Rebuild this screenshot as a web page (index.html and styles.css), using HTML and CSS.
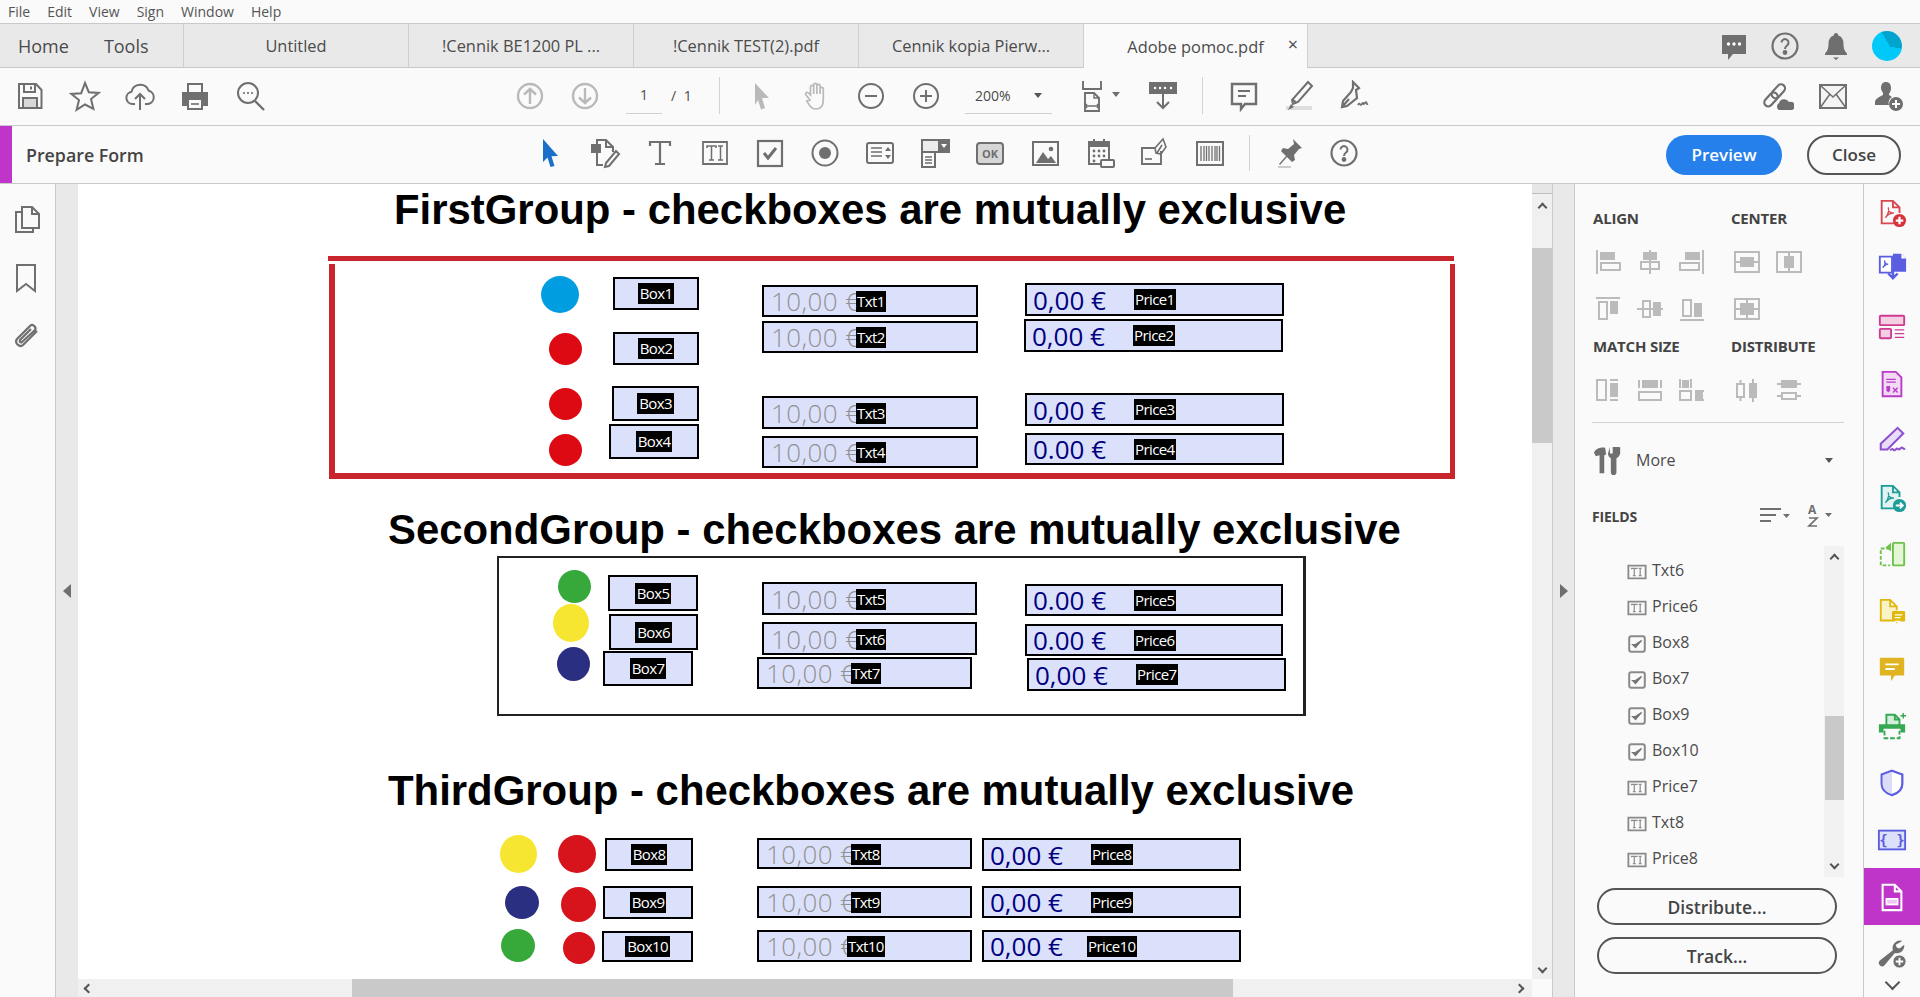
FILE: index.html
```html
<!DOCTYPE html>
<html lang="en">
<head>
<meta charset="utf-8">
<title>Adobe pomoc.pdf</title>
<link rel="stylesheet" href="styles.css">
</head>
<body>
<svg class="sprite" xmlns="http://www.w3.org/2000/svg">
  <symbol id="s-ti" viewBox="0 0 22 18"><path d="M1.500 2h19v14h-19z" fill="none" stroke="#8a8a8a" stroke-width="2"/><path d="M5 6V5h6v1M8 5v8M6.500 13h3M13 5h3M13 13h3M14.500 5v8" fill="none" stroke="#8a8a8a" stroke-width="1.300"/></symbol>
  <symbol id="s-chk" viewBox="0 0 18 18"><rect x="1.200" y="1.200" width="15.600" height="15.600" rx="2" fill="none" stroke="#8a8a8a" stroke-width="2"/><path d="M4.500 9.500l3 3 6-7-5.800 3.800z" fill="#777" stroke="#777" stroke-width="1.200"/></symbol>
  <symbol id="s-help" viewBox="0 0 32 32"><circle cx="16" cy="16" r="12.500" fill="none" stroke="#6f6f6f" stroke-width="2.200"/><path d="M12.500 12.500a3.500 3.500 0 1 1 5.500 3c-1.300 1-2 1.700-2 3.500" fill="none" stroke="#6f6f6f" stroke-width="2"/><circle cx="16" cy="22.500" r="1.400" fill="#6f6f6f"/></symbol>
</svg>
<div class="app">
  <nav class="menu"><span>File</span><span>Edit</span><span>View</span><span>Sign</span><span>Window</span><span>Help</span></nav>

  <div class="tabs">
    <div class="tab-home"><span>Home</span><span>Tools</span></div>
    <div class="tab">Untitled</div>
    <div class="tab">!Cennik BE1200 PL ...</div>
    <div class="tab">!Cennik TEST(2).pdf</div>
    <div class="tab">Cennik kopia Pierw...</div>
    <div class="tab tab-active">Adobe pomoc.pdf<span class="tab-x">×</span></div>
    <div class="tab-right">
      <span class="ib50"><svg class="ic" viewBox="0 0 32 32"><path class="solid" d="M4 5h24v19H15l-5 6v-6H4z"/><g fill="#fff" stroke="none"><circle cx="10.500" cy="14" r="1.700"/><circle cx="16" cy="14" r="1.700"/><circle cx="21.500" cy="14" r="1.700"/></g></svg></span>
      <span class="ib50"><svg class="ic"><use href="#s-help"/></svg></span>
      <span class="ib50"><svg class="ic" viewBox="0 0 32 32"><path class="solid" d="M16 3c1.500 0 2.200 1 2.300 2.400 3.500 1 5.200 4 5.200 8 0 5 1 7.500 3.500 10v1.600H5v-1.600c2.500-2.500 3.500-5 3.500-10 0-4 1.700-7 5.200-8C13.800 4 14.500 3 16 3zM13 27.500h6l-3 2.500z"/></svg></span>
      <span class="avatar"></span>
    </div>
  </div>

  <div class="toolbar">
    <span class="ib"><svg class="ic" viewBox="0 0 32 32"><path d="M5 4h17l5.500 6v18H5z"/><path d="M10 4v8h11V4M17 6.500v3"/><rect x="9" y="18" width="14" height="10" fill="#d8d8d8"/></svg></span>
    <span class="ib"><svg class="ic" viewBox="0 0 32 32"><path d="M16 3l3.800 9.200 9.700.7-7.500 6.200 2.400 9.700L16 24.500l-8.400 5.300L10 20.100l-7.500-6.200 9.700-.7z"/></svg></span>
    <span class="ib"><svg class="ic" viewBox="0 0 32 32"><path d="M11 24H8.500a6.200 6.200 0 0 1-1-12.300 9 9 0 0 1 17.200-1 6.800 6.800 0 0 1-.7 13.300h-3"/><path d="M16 30V14M11 19l5-5 5 5"/></svg></span>
    <span class="ib"><svg class="ic" viewBox="0 0 32 32"><path d="M9 12V4h14v8"/><path class="solid" d="M3 12h26v14h-6v-6H9v6H3z"/><rect x="9" y="19" width="14" height="10" fill="#fafafa"/><path d="M12 24h8" stroke-width="1.600"/></svg></span>
    <span class="ib"><svg class="ic" viewBox="0 0 32 32"><circle cx="14" cy="13" r="10"/><path d="M21 21l9 9" stroke-width="2.400"/><g class="solid-g"><circle cx="10" cy="13" r="1.100"/><circle cx="14" cy="13" r="1.100"/><circle cx="18" cy="13" r="1.100"/></g></svg></span>

    <span class="ib ml-nav dim"><svg class="ic" viewBox="0 0 32 32"><circle cx="16" cy="16" r="12"/><path d="M16 24V9M10 14.500L16 9l6 5.500"/></svg></span>
    <span class="ib dim"><svg class="ic" viewBox="0 0 32 32"><circle cx="16" cy="16" r="12"/><path d="M16 8v15M10 17.500l6 5.500 6-5.500"/></svg></span>
    <span class="page-input">1</span><span class="page-total">/ 1</span>
    <span class="sep sep-a"></span>
    <span class="ib ml-13 dim"><svg class="ic" viewBox="0 0 32 32"><path class="solid-dim" d="M10 3l14 15h-7l3 10-4 1.500L13 20l-3 5z"/></svg></span>
    <span class="ib dim"><svg class="ic" viewBox="0 0 32 32"><path d="M10 20l-4-5c-1.500-2 1-3.500 2.500-2l2 2V7a1.600 1.600 0 0 1 3.200 0v7-9a1.600 1.600 0 0 1 3.200 0v9-8a1.600 1.600 0 0 1 3.200 0v8-5a1.600 1.600 0 0 1 3.200 0v11c0 6-3 9-7.500 9s-6-3-9-8z" stroke-width="1.700"/></svg></span>
    <span class="ib"><svg class="ic" viewBox="0 0 32 32"><circle cx="16" cy="16" r="12"/><path d="M10 16h12"/></svg></span>
    <span class="ib"><svg class="ic" viewBox="0 0 32 32"><circle cx="16" cy="16" r="12"/><path d="M10 16h12M16 10v12"/></svg></span>
    <span class="zoom-box"><span>200%</span><i class="caret"></i></span>
    <span class="ib ml-24"><svg class="ic wide" viewBox="0 0 48 32"><path d="M3 1v8h18V1M5 31V13h9l5 5v13z" stroke-width="1.900"/><path d="M14 13v5h5M5 26h14M5 26l2-2M5 26l2 2M19 26l-2-2M19 26l-2 2" stroke-width="1.400"/><path class="solid" d="M32 12h8l-4 5z"/></svg></span>
    <span class="ib ml-4"><svg class="ic" viewBox="0 0 32 32"><rect x="3" y="3" width="26" height="10" fill="#6f6f6f"/><path d="M8 8h.1M13 8h.1M18 8h.1M24 8h.1" stroke="#fff" stroke-width="2.400" stroke-linecap="round"/><path d="M16 13v15M10 22l6 6 6-6"/></svg></span>
    <span class="sep sep-b"></span>
    <span class="ib ml-13"><svg class="ic" viewBox="0 0 32 32"><path d="M4 4h24v20H17l-4 5v-5H4z" stroke-width="2.400"/><path d="M10 11h12M10 16h8"/></svg></span>
    <span class="ib"><svg class="ic" viewBox="0 0 32 32"><path d="M25 2l4 4L15 22l-5 2-1-4zM10 20l4 3"/><rect x="3" y="26" width="26" height="4" fill="#ddd" stroke="none"/><path class="solid" d="M5 30l3-6 3 3z"/></svg></span>
    <span class="ib"><svg class="ic" viewBox="0 0 32 32"><path d="M15 2l6 6-3 2 1 8-10 8-5 1 1-6 8-9 2-4zM4 27l7-8" stroke-width="2.200"/><path d="M20 25c2-4 2 2 4-1s1 2 3-1 1 2 3 1" stroke-width="1.800"/></svg></span>
    <div class="tool-right">
      <span class="ib"><svg class="ic" viewBox="0 0 32 32"><g transform="rotate(-48 13 15)"><rect x="-1" y="11" width="16" height="8" rx="4" stroke-width="2.200"/><rect x="10" y="11" width="16" height="8" rx="4" stroke-width="2.200"/></g><path class="solid" d="M17 30a4 4 0 0 1 0-7 5.500 5.500 0 0 1 10-1 4.200 4.200 0 0 1 3 8z"/></svg></span>
      <span class="ib"><svg class="ic" viewBox="0 0 32 32"><rect x="3" y="5" width="26" height="23" fill="#f4f4f4"/><path d="M3 5l13 12L29 5M3 28l10-14M29 28L19 14" stroke-width="1.500"/></svg></span>
      <span class="ib"><svg class="ic" viewBox="0 0 32 32"><path class="solid" d="M14 2c3 0 5 2 5 6 0 2.500-1 4.500-2 6v1l3 2a7 7 0 0 0-3 8H3v-3c0-3 4-5 8-7v-2c-1-1.500-2-3.500-2-5 0-4 2-6 5-6z"/><circle cx="24" cy="24" r="7" fill="#6f6f6f" stroke="none"/><path d="M24 20v8M20 24h8" stroke="#fff" stroke-width="2"/></svg></span>
    </div>
  </div>

  <div class="formbar">
    <span class="strip"></span>
    <span class="form-title">Prepare Form</span>
    <span class="ib"><svg class="ic" viewBox="0 0 32 32"><path fill="#1a6fc9" stroke="none" d="M9 2l15 17-6.500.3 3 9.700-4 1-3-9.500L9 25z"/></svg></span>
    <span class="ib"><svg class="ic" viewBox="0 0 32 32"><path class="solid" d="M2 7h10v9H2z"/><path d="M8 7V3h9l7 7v5M17 3v7h7M8 16v12h6"/><path d="M27 14l3 3-10 12-4 1 1-4z"/></svg></span>
    <span class="ib"><svg class="ic" viewBox="0 0 32 32"><path d="M6 9V5h20v4M16 5v22M11 27h10" stroke-width="2.200"/></svg></span>
    <span class="ib"><svg class="ic" viewBox="0 0 32 32"><path d="M4 5h24v22H4z" stroke-width="1.800"/><path d="M8 11v-2h9v2M12.500 9v14M10 23h5M19 9h5M19 23h5M21.500 9v14" stroke-width="1.500"/></svg></span>
    <span class="ib"><svg class="ic" viewBox="0 0 32 32"><rect x="4" y="4" width="24" height="25" stroke-width="2.200"/><path d="M10 16l4 5 8-10" stroke-width="3"/></svg></span>
    <span class="ib"><svg class="ic" viewBox="0 0 32 32"><circle cx="16" cy="16" r="12.500"/><circle class="solid" cx="16" cy="16" r="6"/></svg></span>
    <span class="ib"><svg class="ic" viewBox="0 0 32 32"><rect x="3" y="6" width="26" height="20" rx="2"/><path d="M7 11h11M7 15h11M7 19h11" stroke-width="1.600"/><path class="solid" d="M21 14h6l-3-4zM21 18h6l-3 4z"/></svg></span>
    <span class="ib"><svg class="ic" viewBox="0 0 32 32"><rect x="3" y="3" width="27" height="12" fill="#ececec"/><rect x="20" y="3" width="10" height="12" fill="#6f6f6f"/><path d="M22 7h6l-3 4z" fill="#fff" stroke="none"/><rect x="3" y="15" width="13" height="15"/><path d="M6 20h7M6 23h7M6 26h7" stroke-width="1.500"/></svg></span>
    <span class="ib"><svg class="ic" viewBox="0 0 32 32"><rect x="3" y="6" width="26" height="21" rx="3" fill="#d6d6d6"/><text class="ok-text" x="16" y="21">OK</text></svg></span>
    <span class="ib"><svg class="ic" viewBox="0 0 32 32"><rect x="4" y="5" width="25" height="23"/><path class="solid" d="M7 26l7-11 5 7 3-3 5 7z"/><circle class="solid" cx="22" cy="12" r="2.300"/></svg></span>
    <span class="ib"><svg class="ic" viewBox="0 0 32 32"><path d="M5 5h20v22H5zM10 2v5M20 2v5"/><path class="solid" d="M5 5h20v5H5z"/><g class="solid-g"><circle cx="10" cy="14" r="1.400"/><circle cx="15" cy="14" r="1.400"/><circle cx="20" cy="14" r="1.400"/><circle cx="10" cy="19" r="1.400"/><circle cx="15" cy="19" r="1.400"/><circle cx="20" cy="19" r="1.400"/><circle cx="10" cy="24" r="1.400"/></g><rect x="17" y="23" width="13" height="7" rx="1" fill="#fafafa"/></svg></span>
    <span class="ib"><svg class="ic" viewBox="0 0 32 32"><path d="M22 14v13H3V11h13" stroke-width="1.900"/><path d="M24 2l3 8-5 7-5-1-1-5zM18 16l5-8" stroke-width="1.600"/><path d="M6 22h7" stroke-width="1.600"/></svg></span>
    <span class="ib"><svg class="ic" viewBox="0 0 32 32"><rect x="3" y="5" width="26" height="23"/><path d="M7 9v15M10 9v15M12.500 9v15M15 9v15M18 9v15M21 9v15M23 9v15M25.500 9v15" stroke-width="1.300"/></svg></span>
    <span class="sep sep-c"></span>
    <span class="ib ml-11"><svg class="ic" viewBox="0 0 32 32"><path class="solid" d="M20 2l9 9-3 1-5 6 1 5-3 2-5-5-7 8-1-1 7-8-5-5 2-3 5 1 6-5z"/><path d="M5 30h13" stroke="#ccc"/></svg></span>
    <span class="ib"><svg class="ic"><use href="#s-help"/></svg></span>
    <div class="form-actions"><button class="btn-primary">Preview</button><button class="btn-close">Close</button></div>
  </div>

  <div class="main">
    <aside class="lrail">
      <svg class="ic" viewBox="0 0 32 32"><path d="M12 3h10l7 7v14H12z"/><path d="M22 3v7h7M12 8H6v20h17v-4"/></svg>
      <svg class="ic" viewBox="0 0 32 32"><path d="M7 3h18v26l-9-7-9 7z"/></svg>
      <svg class="ic" viewBox="0 0 32 32"><path d="M27 11L13 25c-3 3-9-2-6-6L20 6c2-3 7 1 5 4L12 22c-1.500 1-3-.5-2-2l11-11" stroke-width="2.200"/></svg>
    </aside>
    <div class="gutter"><i class="tri-left"></i></div>

    <div class="doc">
      <div class="page">
        <h1 class="t1">FirstGroup - checkboxes are mutually exclusive</h1>
        <section class="g1">
          <i class="dot d-blue p1"></i><i class="dot d-red p2"></i><i class="dot d-red p3"></i><i class="dot d-red p4"></i>
          <div class="fld box b1"><b>Box1</b></div>
          <div class="fld box b2"><b>Box2</b></div>
          <div class="fld box b3"><b>Box3</b></div>
          <div class="fld box b4"><b>Box4</b></div>
          <div class="fld txt t-1"><span>10,00 €</span><b>Txt1</b></div>
          <div class="fld txt t-2"><span>10,00 €</span><b>Txt2</b></div>
          <div class="fld txt t-3"><span>10,00 €</span><b>Txt3</b></div>
          <div class="fld txt t-4"><span>10,00 €</span><b>Txt4</b></div>
          <div class="fld price r1"><span>0,00 €</span><b>Price1</b></div>
          <div class="fld price r2"><span>0,00 €</span><b>Price2</b></div>
          <div class="fld price r3"><span>0,00 €</span><b>Price3</b></div>
          <div class="fld price r4"><span>0.00 €</span><b>Price4</b></div>
        </section>

        <h1 class="t2">SecondGroup - checkboxes are mutually exclusive</h1>
        <section class="g2">
          <i class="dot d-green p5"></i><i class="dot d-yellow p6"></i><i class="dot d-navy p7"></i>
          <div class="fld box b5"><b>Box5</b></div>
          <div class="fld box b6"><b>Box6</b></div>
          <div class="fld box b7"><b>Box7</b></div>
          <div class="fld txt t-5"><span>10,00 €</span><b>Txt5</b></div>
          <div class="fld txt t-6"><span>10,00 €</span><b>Txt6</b></div>
          <div class="fld txt t-7"><span>10,00 €</span><b>Txt7</b></div>
          <div class="fld price r5"><span>0.00 €</span><b>Price5</b></div>
          <div class="fld price r6"><span>0.00 €</span><b>Price6</b></div>
          <div class="fld price r7"><span>0,00 €</span><b>Price7</b></div>
        </section>

        <h1 class="t3">ThirdGroup - checkboxes are mutually exclusive</h1>
        <section class="g3">
          <i class="dot d-yellow p8"></i><i class="dot d-red2 p9"></i>
          <i class="dot d-navy p10"></i><i class="dot d-red2 p11"></i>
          <i class="dot d-green p12"></i><i class="dot d-red2 p13"></i>
          <div class="fld box b8"><b>Box8</b></div>
          <div class="fld box b9"><b>Box9</b></div>
          <div class="fld box b10"><b>Box10</b></div>
          <div class="fld txt t-8"><span>10,00 €</span><b>Txt8</b></div>
          <div class="fld txt t-9"><span>10,00 €</span><b>Txt9</b></div>
          <div class="fld txt t-10"><span>10,00 €</span><b>Txt10</b></div>
          <div class="fld price r8"><span>0,00 €</span><b>Price8</b></div>
          <div class="fld price r9"><span>0,00 €</span><b>Price9</b></div>
          <div class="fld price r10"><span>0,00 €</span><b>Price10</b></div>
        </section>
      </div>
      <div class="hscroll"><i class="chev-l"></i><span class="hthumb"></span><i class="chev-r"></i></div>
    </div>

    <div class="vscroll"><span class="vhandle"></span><i class="chev-u"></i><span class="vthumb"></span><i class="chev-d"></i></div>
    <div class="gutter gutter-r"><i class="tri-right"></i></div>

    <aside class="panel">
      <div class="p-head"><span>ALIGN</span><span>CENTER</span></div>
      <div class="p-row">
        <span class="ai"><svg class="ic pi" viewBox="0 0 28 28"><path d="M3 2v24M7 5h13v6H7zM7 15h19v7H7z"/><rect x="7" y="5" width="13" height="6" fill="#bbb"/></svg></span>
        <span class="ai"><svg class="ic pi" viewBox="0 0 28 28"><path d="M14 2v24M8 5h12v6H8zM5 14h18v7H5z"/><rect x="8" y="5" width="12" height="6" fill="#bbb"/></svg></span>
        <span class="ai"><svg class="ic pi" viewBox="0 0 28 28"><path d="M25 2v24M8 5h13v6H8zM2 15h19v7H2z"/><rect x="8" y="5" width="13" height="6" fill="#bbb"/></svg></span>
        <span class="ai ai-gap"><svg class="ic pi" viewBox="0 0 28 28"><rect x="2" y="4" width="24" height="20"/><path d="M2 14h24"/><rect x="8" y="10" width="12" height="8" fill="#bbb"/></svg></span>
        <span class="ai"><svg class="ic pi" viewBox="0 0 28 28"><rect x="2" y="4" width="24" height="20"/><path d="M14 4v20"/><rect x="10" y="9" width="8" height="10" fill="#bbb"/></svg></span>
      </div>
      <div class="p-row">
        <span class="ai"><svg class="ic pi" viewBox="0 0 28 28"><path d="M2 3h24M5 7h8v17H5zM17 7h6v11h-6z"/><rect x="17" y="7" width="6" height="11" fill="#bbb"/></svg></span>
        <span class="ai"><svg class="ic pi" viewBox="0 0 28 28"><path d="M1 14h26M7 6h7v16H7zM18 8h6v12h-6z"/><rect x="18" y="8" width="6" height="12" fill="#bbb"/></svg></span>
        <span class="ai"><svg class="ic pi" viewBox="0 0 28 28"><path d="M2 25h24M5 5h8v16H5zM17 9h6v12h-6z"/><rect x="17" y="9" width="6" height="12" fill="#bbb"/></svg></span>
        <span class="ai ai-gap"><svg class="ic pi" viewBox="0 0 28 28"><rect x="2" y="4" width="24" height="20"/><path d="M2 14h24M14 4v20"/><rect x="8" y="9" width="12" height="10" fill="#bbb"/></svg></span>
      </div>
      <div class="p-head p-head2"><span>MATCH SIZE</span><span>DISTRIBUTE</span></div>
      <div class="p-row p-row3">
        <span class="ai"><svg class="ic pi" viewBox="0 0 28 28"><path d="M3 4h9v20H3zM16 4h8M16 24h8"/><rect x="17" y="8" width="6" height="12" fill="#bbb"/></svg></span>
        <span class="ai"><svg class="ic pi" viewBox="0 0 28 28"><path d="M3 16h22v8H3zM3 4v8M25 4v8"/><rect x="7" y="5" width="14" height="6" fill="#bbb"/></svg></span>
        <span class="ai"><svg class="ic pi" viewBox="0 0 28 28"><path d="M2 15h11v9H2zM2 3v9M13 3v9M17 15h9M17 24h9"/><rect x="5" y="5" width="5" height="6" fill="#bbb"/><rect x="18" y="17" width="6" height="5" fill="#bbb"/></svg></span>
        <span class="ai ai-gap"><svg class="ic pi" viewBox="0 0 28 28"><path d="M4 8h7v13H4zM7.500 4v4M7.500 21v4M17 8h6v13h-6zM20 3v5M20 21v5"/><rect x="17" y="8" width="6" height="13" fill="#bbb"/></svg></span>
        <span class="ai"><svg class="ic pi" viewBox="0 0 28 28"><path d="M7 5h14v6H7zM2 8h5M21 8h5M7 17h14v6H7zM2 20h5M21 20h5"/><rect x="7" y="5" width="14" height="6" fill="#bbb"/></svg></span>
      </div>
      <div class="p-sep"></div>
      <div class="p-more">
        <svg class="ic tools" viewBox="0 0 32 32"><path class="solid" d="M1 8c2-4 7-6 12-5l1 7-2 1v19H7V11L3 12zM18 2v7h3V2c3 0 5 0 5 0s2 0 3 .5V9c-1 3-2 4-4 5v15a2.500 2.500 0 0 1-6 0V14c-2-1-3-3-3-5z"/></svg>
        <span>More</span><i class="caret caret-more"></i>
      </div>
      <div class="p-fields">
        <strong>FIELDS</strong>
        <svg class="ic sort" viewBox="0 0 32 20"><path d="M1 3h21M1 9h16M1 15h11" stroke-width="2"/><path class="solid" d="M24 8h7l-3.500 4z"/></svg>
        <svg class="ic sort az" viewBox="0 0 32 24"><text class="az-text" x="2" y="10">A</text><path d="M3 14h8l-8 8h8" stroke-width="1.700"/><path class="solid" d="M19 9h7l-3.500 4z"/></svg>
      </div>
      <div class="p-list">
        <ul>
          <li><svg class="li-ti"><use href="#s-ti"/></svg>Txt6</li>
          <li><svg class="li-ti"><use href="#s-ti"/></svg>Price6</li>
          <li><svg class="li-chk"><use href="#s-chk"/></svg>Box8</li>
          <li><svg class="li-chk"><use href="#s-chk"/></svg>Box7</li>
          <li><svg class="li-chk"><use href="#s-chk"/></svg>Box9</li>
          <li><svg class="li-chk"><use href="#s-chk"/></svg>Box10</li>
          <li><svg class="li-ti"><use href="#s-ti"/></svg>Price7</li>
          <li><svg class="li-ti"><use href="#s-ti"/></svg>Txt8</li>
          <li><svg class="li-ti"><use href="#s-ti"/></svg>Price8</li>
        </ul>
        <div class="l-scroll"><i class="chev-u"></i><span class="lthumb"></span><i class="chev-d"></i></div>
      </div>
      <button class="p-btn">Distribute...</button>
      <button class="p-btn p-btn2">Track...</button>
    </aside>

    <aside class="rrail">
      <span class="ri"><svg class="rc" viewBox="0 0 32 32"><path fill="none" stroke="#d8474f" stroke-width="2" d="M19 27H5V3h12l7 7v6M17 3v7h7"/><path fill="none" stroke="#d8474f" stroke-width="1.400" d="M9 21c3-3 4-8 3-11 0 4 2 6 6 6-4 0-7 2-9 5z"/><circle cx="24" cy="24" r="7" fill="#d8333c"/><path d="M24 20v8M20 24h8" stroke="#fff" stroke-width="2.400"/></svg></span>
      <span class="ri ri-up"><svg class="rc" viewBox="0 0 32 32"><path fill="#fff" stroke="#5a5ee0" stroke-width="2" d="M3 6h13v17H3z"/><path fill="#5a5ee0" d="M17 3h9l5 5v14H17z"/><path fill="#fff" d="M26 3l5 5h-5z"/><path fill="none" stroke="#5a5ee0" stroke-width="1.300" d="M6 18c2-2 3-5 2-8 0 3 1 4 4 4-3 0-4 2-6 4z"/><path fill="none" stroke="#5a5ee0" stroke-width="2.600" d="M17 18v11M12 24l5 5 5-5"/></svg></span>
      <span class="ri"><svg class="rc" viewBox="0 0 32 32"><rect x="3" y="4" width="26" height="10" rx="1" fill="#f3cfe2" stroke="#cf3a93" stroke-width="2"/><rect x="3" y="18" width="12" height="10" rx="1" fill="#f3cfe2" stroke="#cf3a93" stroke-width="2"/><path d="M19 19h10M19 23h10M19 27h10" stroke="#cf3a93" stroke-width="1.400"/></svg></span>
      <span class="ri"><svg class="rc" viewBox="0 0 32 32"><path fill="#f1daf4" stroke="#bb3ac8" stroke-width="2" d="M6 3h14l6 6v20H6z"/><path d="M10 11h10M10 14h10" stroke="#bb3ac8" stroke-width="1.400"/><path d="M10 18h4v5l-2 2-2-2z" fill="#bb3ac8"/><path d="M17 20l5 5M22 20l-5 5" stroke="#bb3ac8" stroke-width="1.500"/></svg></span>
      <span class="ri"><svg class="rc" viewBox="0 0 32 32"><path fill="#e9def7" stroke="#8d50cf" stroke-width="2.200" d="M22 2l6 6L11 25H4v-6z"/><path fill="none" stroke="#8d50cf" stroke-width="2.200" d="M14 26c4-4 3 2 6-1s2 2 5-1 2 2 5 0"/></svg></span>
      <span class="ri"><svg class="rc" viewBox="0 0 32 32"><path fill="#e0f2f1" stroke="#1c9c96" stroke-width="2" d="M20 27H5V3h12l7 7v5M17 3v7h7"/><path fill="none" stroke="#1c9c96" stroke-width="1.400" d="M9 21c3-3 4-8 3-11 0 4 2 6 6 6-4 0-7 2-9 5z"/><circle cx="24" cy="24" r="7" fill="#1c9c96"/><path d="M20 24h7M24.500 21l3 3-3 3" fill="none" stroke="#fff" stroke-width="2"/></svg></span>
      <span class="ri"><svg class="rc" viewBox="0 0 32 32"><rect x="17" y="3" width="12" height="24" rx="1" fill="#e5f6d8" stroke="#6cc24a" stroke-width="2"/><path d="M14 9H4v18h10" fill="none" stroke="#6cc24a" stroke-width="2" stroke-dasharray="4 2"/><path d="M15 3l-6 5 6 4zM8 8h5" fill="#6cc24a"/></svg></span>
      <span class="ri"><svg class="rc" viewBox="0 0 32 32"><path fill="#fbf3c8" stroke="#e1b80d" stroke-width="2" d="M17 25H4V3h10l7 7v4M14 3v7h7"/><rect x="16" y="15" width="14" height="11" rx="1" fill="#e1b80d"/><path d="M20 26v4l4-4zM19 19h8M19 22h6" fill="#e1b80d" stroke="#fff" stroke-width="1.200"/></svg></span>
      <span class="ri"><svg class="rc" viewBox="0 0 32 32"><path fill="#e0b421" d="M4 4h24a1 1 0 0 1 1 1v17a1 1 0 0 1-1 1H19l-4 6v-6H4a1 1 0 0 1-1-1V5a1 1 0 0 1 1-1z"/><path d="M9 11h14M9 16h10" stroke="#fff" stroke-width="2"/></svg></span>
      <span class="ri"><svg class="rc" viewBox="0 0 32 32"><path fill="#d3eed9" stroke="#35a852" stroke-width="2" d="M10 15V4h9l5 5v6M19 4v5h5"/><path fill="#35a852" d="M2 14h28v9h-5v-4H7v4H2z"/><path fill="none" stroke="#35a852" stroke-width="2" stroke-dasharray="5 2" d="M8 21v8h16v-8"/><path d="M28 2v6M25 5h6" stroke="#35a852" stroke-width="1.500"/></svg></span>
      <span class="ri"><svg class="rc" viewBox="0 0 32 32"><path fill="#fff" stroke="#5a5ee0" stroke-width="2.400" d="M16 3l11 4v10c0 6-5 10-11 12C10 27 5 23 5 17V7z"/><path fill="#dcdcf7" d="M16 4v24C11 26 6 23 6 17V8z"/></svg></span>
      <span class="ri"><svg class="rc" viewBox="0 0 32 32"><rect x="2" y="6" width="28" height="20" fill="#dde0fa" stroke="#5a5ee0" stroke-width="2"/><text class="brace" x="16" y="21">{ }</text></svg></span>
      <span class="ri ri-active"><svg class="rc" viewBox="0 0 32 32"><path fill="none" stroke="#fff" stroke-width="2.200" d="M6 3h13l7 7v20H6zM19 3v7h7"/><rect x="10" y="18" width="12" height="6" fill="#f0c9f3" stroke="#fff" stroke-width="1.800"/></svg></span>
      <span class="ri"><svg class="rc" viewBox="0 0 32 32"><path fill="#6f6f6f" d="M27 2a8 8 0 0 0-10 10L3 23a3 3 0 0 0 5 5l11-13a8 8 0 0 0 10-9l-5 4-3-1-1-3z"/><circle cx="24" cy="24" r="7" fill="#6f6f6f" stroke="#fafafa" stroke-width="1"/><path d="M24 20v8M20 24h8" stroke="#fff" stroke-width="2"/></svg></span>
      <span class="ri-more"><i class="chev-d big"></i></span>
    </aside>
  </div>
</div>
</body>
</html>
```

FILE: styles.css
```css
* { box-sizing: border-box; }
html, body { margin: 0; height: 100%; overflow: hidden; }
body { font-family: "Open Sans", "Noto Sans", sans-serif; color: #4b4b4b; background: #fafafa; }
.sprite { display: none; }
.app { width: 1920px; height: 997px; display: flex; flex-direction: column; overflow: hidden; }

/* menu and tabs */
.menu { height: 23px; display: flex; align-items: center; gap: 17px; padding-left: 8px; font-size: 14px; background: #fafafa; color: #555; }
.tabs { height: 45px; display: flex; background: #e9e9e9; border-top: 1px solid #c9c9c9; border-bottom: 1px solid #c9c9c9; }
.tab-home { width: 183px; display: flex; align-items: center; gap: 35px; padding-left: 18px; font-size: 18px; }
.tab { width: 225px; display: flex; align-items: center; justify-content: center; font-size: 16.400px; border-left: 1px solid #cfcfcf; position: relative; }
.tab-active { background: #fafafa; margin-bottom: -1px; border-right: 1px solid #cfcfcf; }
.tab-x { position: absolute; right: 9px; top: 9px; font-size: 18px; line-height: 22px; }
.tab-right { margin-left: auto; display: flex; align-items: center; padding-right: 18px; }
.ib50 { width: 51px; height: 43px; display: flex; align-items: center; justify-content: center; }
.avatar { width: 30px; height: 30px; margin-left: 11px; border-radius: 50%; background: conic-gradient(from 10deg at 60% 52%, #00a4cc 0 90deg, #00c8f8 90deg 260deg, #00c8f8 260deg 320deg, #00a4cc 320deg); }

/* icons */
.ic { width: 32px; height: 32px; fill: none; stroke: #6f6f6f; stroke-width: 2; display: block; flex: none; }
.ic.wide { width: 48px; }
.solid { fill: #6f6f6f; stroke: none; }
.solid-g { fill: #6f6f6f; stroke: none; }
.solid-dim { fill: #b9b9b9; stroke: none; }
.dim .ic { stroke: #b9b9b9; stroke-width: 2.400; }
.ok-text { font: 700 11px "Open Sans", sans-serif; fill: #6f6f6f; stroke: none; text-anchor: middle; }
.az-text { font: 700 12px "Open Sans", sans-serif; fill: #6f6f6f; stroke: none; }
.brace { font: 700 15px "DejaVu Sans Mono", monospace; fill: #5a5ee0; text-anchor: middle; }
.ib { width: 55px; height: 57px; display: flex; align-items: center; justify-content: center; flex: none; }
.sep { width: 1px; background: #d2d2d2; flex: none; }

/* document toolbar */
.toolbar { height: 58px; display: flex; align-items: center; padding-left: 2px; border-bottom: 1px solid #c9c9c9; background: #fafafa; }
.toolbar .ib { margin-top: -2px; }
.ml-nav { margin-left: 225px; }
.ml-13 { margin-left: 13px; }
.ml-24 { margin-left: 24px; }
.ml-4 { margin-left: 4px; }
.ml-11 { margin-left: 11px; }
.page-input { width: 36px; margin-left: 14px; height: 36px; line-height: 34px; margin-top: -2px; text-align: center; font-size: 14px; border-bottom: 1px solid #cfcfcf; }
.page-total { margin-left: 9px; margin-top: -2px; font-size: 14px; width: 21px; word-spacing: 4px; white-space: nowrap; }
.sep-a { margin-left: 27px; height: 37px; margin-top: -2px; }
.sep-b { margin-left: 12px; height: 37px; margin-top: -2px; }
.zoom-box { margin-left: 12px; width: 87px; height: 36px; display: flex; align-items: center; padding-left: 10px; font-size: 14px; border-bottom: 1px solid #cfcfcf; margin-top: -2px; }
.caret { width: 0; height: 0; border-left: 4px solid transparent; border-right: 4px solid transparent; border-top: 5px solid #555; margin-left: auto; margin-right: 10px; }
.tool-right { margin-left: auto; display: flex; padding-right: 5px; }

/* prepare form bar */
.formbar { height: 58px; display: flex; align-items: center; border-bottom: 1px solid #c9c9c9; background: #fafafa; }
.formbar .ib { margin-top: -4px; }
.strip { width: 12px; height: 100%; background: #c035c9; flex: none; }
.form-title { width: 510px; padding-left: 14px; font-size: 17.800px; font-weight: 600; flex: none; margin-top: 1px; color: #444; }
.sep-c { margin-left: 12px; height: 36px; margin-top: -4px; }
.form-actions { margin-left: auto; display: flex; gap: 25px; padding-right: 19px; }
.btn-primary, .btn-close { height: 40px; border-radius: 20px; font: 600 17px "Open Sans", sans-serif; }
.btn-primary { width: 116px; background: #2680eb; color: #fff; border: 0; }
.btn-close { width: 94px; background: #fafafa; color: #444; border: 2px solid #555; }

/* main row */
.main { flex: 1; min-height: 0; display: flex; }
.lrail { width: 56px; border-right: 1px solid #c9c9c9; display: flex; flex-direction: column; align-items: center; padding-top: 20px; gap: 26px; padding-right: 4px; background: #fafafa; flex: none; }
.gutter { width: 22px; background: #e9e9e9; display: flex; align-items: center; justify-content: center; flex: none; }
.gutter-r { width: 23px; border-left: 1px solid #c9c9c9; border-right: 1px solid #c9c9c9; }
.tri-left { border-top: 7px solid transparent; border-bottom: 7px solid transparent; border-right: 8px solid #6f6f6f; }
.tri-right { border-top: 7px solid transparent; border-bottom: 7px solid transparent; border-left: 8px solid #6f6f6f; }

.doc { width: 1454px; display: flex; flex-direction: column; flex: none; }
.page { flex: 1; min-height: 0; background: #fff; overflow: hidden; }
.page h1 { margin: 0; font: 700 41.900px/52px "Liberation Sans", Arial, sans-serif; color: #000; white-space: nowrap; }
.t1 { padding-left: 316px; }
.page .t2 { padding-left: 310px; margin-top: 25px; }
.page .t3 { padding-left: 310px; margin-top: 49px; }

.g1 { position: relative; margin: 20px 0 0 250px; width: 1127px; height: 223px; border-top: 5px solid transparent; }
.g1::before { content: ""; position: absolute; left: 0; top: -5px; width: 1126px; height: 5px; background: #c9252d; }
.g1::after { content: ""; position: absolute; left: 1px; right: 0; top: 3px; bottom: 0; border: 6px solid #c9252d; border-top: 0; border-right-width: 5px; }
.g2 { position: relative; margin: 0 0 0 419px; width: 809px; height: 160px; border: 2px solid #222; border-right-width: 3px; }
.g3 { position: relative; height: 164px; margin-top: -2px; }

.dot { position: absolute; border-radius: 50%; }
.d-blue { background: #009ee0; }
.d-red { background: #dd0a14; }
.d-red2 { background: #d7141c; }
.d-green { background: #36a93a; }
.d-yellow { background: #f7e631; }
.d-navy { background: #2b2f82; }

.fld { position: absolute; z-index: 1; background: #dce1fb; border: 2px solid #000; display: flex; align-items: center; }
.fld b { background: #000; color: #fff; font-weight: 400; font-size: 15px; height: 21px; line-height: 21px; letter-spacing: -.6px; text-align: center; flex: none; position: relative; }
.box { justify-content: center; }
.box b { padding: 0 2px; }
.fld span { display: block; flex: none; white-space: nowrap; line-height: 26px; }
.txt span { width: 92px; padding-left: 7px; color: #929292; font-size: 26px; font-weight: 300; letter-spacing: .4px; }
.txt b { margin-top: 1px; padding: 0 1px; min-width: 28px; }
.t-10 span { width: 88px; }
.price span { width: 107px; padding-left: 6px; color: #000080; font-size: 26px; font-weight: 400; }
.price b { padding: 0 1px; min-width: 41px; }
.r10 span { width: 103px; }

/* group one */
.p1 { left: 213px; top: 15px; width: 38px; height: 37px; }
.p2 { left: 221px; top: 72px; width: 33px; height: 32px; }
.p3 { left: 221px; top: 127px; width: 33px; height: 32px; }
.p4 { left: 221px; top: 173px; width: 33px; height: 32px; }
.b1 { left: 285px; top: 16px; width: 86px; height: 33px; }
.b2 { left: 285px; top: 71px; width: 86px; height: 33px; }
.b3 { left: 284px; top: 125px; width: 87px; height: 35px; }
.b4 { left: 281px; top: 163px; width: 90px; height: 35px; }
.t-1 { left: 434px; top: 24px; width: 216px; height: 32px; }
.t-2 { left: 434px; top: 60px; width: 216px; height: 32px; }
.t-3 { left: 434px; top: 135px; width: 216px; height: 33px; }
.t-4 { left: 434px; top: 175px; width: 216px; height: 32px; }
.r1 { left: 697px; top: 22px; width: 259px; height: 33px; }
.r2 { left: 696px; top: 58px; width: 259px; height: 33px; }
.r3 { left: 697px; top: 132px; width: 259px; height: 33px; }
.r4 { left: 697px; top: 172px; width: 259px; height: 32px; }

/* group two */
.p5 { left: 59px; top: 12px; width: 33px; height: 33px; }
.p6 { left: 54px; top: 46px; width: 36px; height: 38px; }
.p7 { left: 58px; top: 89px; width: 33px; height: 34px; }
.b5 { left: 109px; top: 17px; width: 90px; height: 36px; }
.b6 { left: 110px; top: 56px; width: 89px; height: 36px; }
.b7 { left: 104px; top: 93px; width: 90px; height: 35px; }
.t-5 { left: 263px; top: 24px; width: 215px; height: 33px; }
.t-6 { left: 263px; top: 64px; width: 215px; height: 33px; }
.t-7 { left: 258px; top: 99px; width: 215px; height: 32px; }
.r5 { left: 526px; top: 26px; width: 258px; height: 32px; }
.r6 { left: 526px; top: 66px; width: 258px; height: 32px; }
.r7 { left: 528px; top: 100px; width: 259px; height: 33px; }

/* group three */
.p8 { left: 422px; top: 20px; width: 37px; height: 38px; }
.p9 { left: 480px; top: 20px; width: 38px; height: 38px; }
.p10 { left: 427px; top: 71px; width: 34px; height: 33px; }
.p11 { left: 483px; top: 72px; width: 35px; height: 35px; }
.p12 { left: 423px; top: 114px; width: 34px; height: 33px; }
.p13 { left: 485px; top: 117px; width: 32px; height: 32px; }
.b8 { left: 527px; top: 23px; width: 88px; height: 33px; }
.b9 { left: 525px; top: 71px; width: 90px; height: 33px; }
.b10 { left: 524px; top: 116px; width: 91px; height: 31px; }
.t-8 { left: 679px; top: 23px; width: 215px; height: 31px; }
.t-9 { left: 679px; top: 71px; width: 215px; height: 32px; }
.t-10 { left: 679px; top: 115px; width: 215px; height: 32px; }
.r8 { left: 904px; top: 23px; width: 259px; height: 33px; }
.r9 { left: 904px; top: 71px; width: 259px; height: 32px; }
.r10 { left: 904px; top: 115px; width: 259px; height: 32px; }

/* scrollbars */
.chev-l, .chev-r, .chev-u, .chev-d { display: block; width: 7px; height: 7px; border-left: 2px solid #555; border-top: 2px solid #555; flex: none; }
.chev-l { transform: rotate(-45deg); }
.chev-r { transform: rotate(135deg); }
.chev-u { transform: rotate(45deg); }
.chev-d { transform: rotate(225deg); }
.hscroll { height: 18px; background: #f0f0f0; display: flex; align-items: center; padding-left: 7px; }
.hthumb { width: 881px; height: 18px; margin-left: 260px; background: #c9c9c9; }
.hscroll .chev-r { margin-left: 283px; }
.vscroll { width: 20px; height: 795px; background: #f0f0f0; display: flex; flex-direction: column; align-items: center; flex: none; }
.vhandle { width: 100%; height: 10px; border-bottom: 1px solid #bdbdbd; background: #e6e6e6; }
.vscroll .chev-u { margin-top: 10px; }
.vthumb { width: 20px; height: 195px; margin-top: 37px; background: #c9c9c9; }
.vscroll .chev-d { margin-top: auto; margin-bottom: 7px; }

/* right panel */
.panel { width: 288px; flex: none; padding-left: 12px; background: #fafafa; }
.p-head { display: flex; margin-top: 24px; height: 20px; line-height: 20px; font-size: 15px; font-weight: 700; color: #444; letter-spacing: -.2px; white-space: nowrap; }
.p-head span { width: 139px; padding-left: 6px; }
.p-head2 { margin-top: 4px; }
.p-row { display: flex; }
.p-head + .p-row { margin-top: 10px; }
.p-head2 + .p-row { margin-top: 10px; }
.ai { width: 42px; height: 47px; display: flex; align-items: center; justify-content: center; }
.ai-gap { margin-left: 13px; }
.pi { width: 28px; height: 28px; stroke: #bbb; }
.p-sep { width: 252px; height: 1px; background: #d2d2d2; margin: 9px 0 0 5px; }
.p-more { display: flex; align-items: center; height: 36px; margin-top: 19px; padding-left: 6px; font-size: 16px; }
.tools { width: 30px; height: 30px; margin-right: 13px; }
.caret-more { margin-left: 149px; margin-right: 0; }
.p-fields { display: flex; align-items: center; height: 24px; margin-top: 26px; padding-left: 5px; font-size: 14px; color: #444; }
.p-fields strong { width: 167px; letter-spacing: -.2px; }
.sort { width: 32px; height: 20px; }
.az { height: 24px; margin-left: 15px; }
.p-list { display: flex; height: 331px; margin-top: 18px; width: 257px; }
.p-list ul { list-style: none; margin: 0; padding: 6px 0 0 40px; flex: 1; overflow: hidden; }
.p-list li { height: 36px; display: flex; align-items: center; gap: 5px; font-size: 16px; }
.li-ti { width: 20px; height: 18px; margin-top: 4px; flex: none; }
.li-chk { width: 18px; height: 18px; margin: 4px 1px 0 1px; flex: none; }
.l-scroll { width: 20px; background: #f2f2f2; display: flex; flex-direction: column; align-items: center; }
.l-scroll .chev-u { margin-top: 9px; }
.lthumb { width: 19px; height: 84px; margin-top: 154px; background: #c9c9c9; }
.l-scroll .chev-d { margin-top: auto; margin-bottom: 9px; }
.p-btn { display: block; width: 240px; height: 37px; margin: 11px 0 0 10px; border: 2px solid #555; border-radius: 19px; background: #fafafa; color: #444; font: 600 17.500px "Open Sans", sans-serif; }
.p-btn2 { margin-top: 12px; }

/* right rail */
.rrail { flex: 1; border-left: 1px solid #c9c9c9; background: #fafafa; display: flex; flex-direction: column; }
.ri { height: 57px; display: flex; align-items: center; justify-content: center; flex: none; }
.ri-up { margin-top: -4px; height: 61px; padding-bottom: 4px; }
.ri-active { background: #c035c9; }
.rc { width: 30px; height: 30px; display: block; }
.ri-more { display: flex; justify-content: center; margin-top: -5px; }
.big { width: 11px; height: 11px; }
```
